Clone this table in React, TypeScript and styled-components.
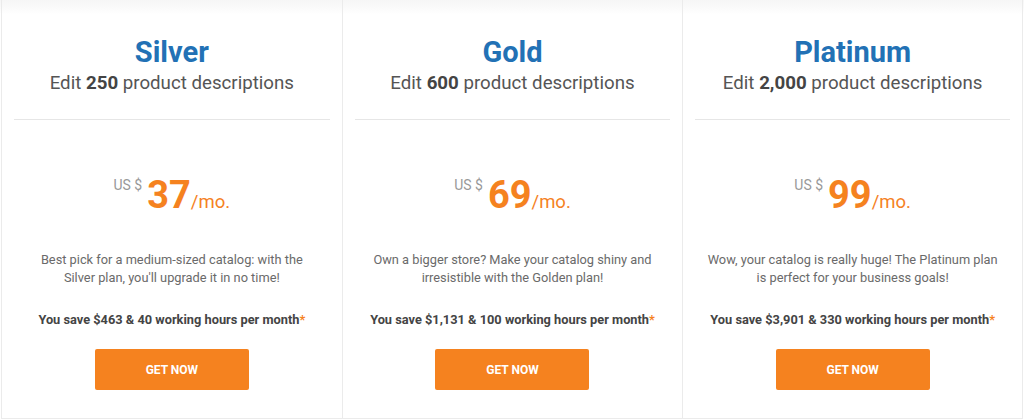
import styled, { createGlobalStyle } from "styled-components";

const GlobalStyle = createGlobalStyle`
	html, body {
		margin: 0;
		padding: 0;
		background: #ffffff;
	}
	body {
		font-family: Roboto, "Liberation Sans", Arial, sans-serif;
	}
`;

const Page = styled.div`
	width: 1024px;
	height: 420px;
	box-sizing: border-box;
	padding: 0 1px 1px 1px;
	background: linear-gradient(to bottom, #f6f6f6 0px, #fdfdfd 12px, #ffffff 14px);
`;

const Plans = styled.div`
	display: grid;
	grid-template-columns: repeat(3, 1fr);
	height: 100%;
	border-bottom: 1px solid #ebebeb;
	box-sizing: border-box;
`;

const Plan = styled.div`
	display: flex;
	flex-direction: column;
	align-items: center;
	border-left: 1px solid #ebebeb;
	padding: 34px 12px 0;
	text-align: center;

	&:last-child {
		border-right: 1px solid #ebebeb;
	}
`;

const Title = styled.h2`
	margin: 0;
	font-size: 29px;
	line-height: 36px;
	font-weight: 700;
	color: #2271b5;
`;

const Subtitle = styled.p`
	margin: 1px 0 0;
	font-size: 18.7px;
	line-height: 24px;
	color: #555555;

	b {
		color: #444444;
	}
`;

const Divider = styled.hr`
	align-self: stretch;
	margin: 24px 0 0;
	border: 0;
	border-top: 1px solid #e6e6e6;
`;

const PriceRow = styled.div`
	display: flex;
	align-items: baseline;
	margin-top: 53px;
	color: #f5821f;
`;

const Currency = styled.span`
	align-self: flex-start;
	margin-top: 4px;
	margin-right: 5px;
	font-size: 14px;
	line-height: 16px;
	color: #999999;
`;

const Amount = styled.span`
	font-size: 38px;
	line-height: 44px;
	font-weight: 700;
`;

const Period = styled.span`
	font-size: 18.5px;
`;

const Description = styled.p`
	margin: 34px 0 0;
	font-size: 12.8px;
	line-height: 18px;
	color: #6a6a6a;
	white-space: pre-line;
`;

const Savings = styled.p`
	margin: 24px 0 0;
	font-size: 12.8px;
	line-height: 18px;
	font-weight: 700;
	color: #444444;

	span {
		color: #f5821f;
	}
`;

const Button = styled.a`
	display: flex;
	align-items: center;
	justify-content: center;
	width: 154px;
	height: 41px;
	margin-top: 20px;
	border-radius: 2px;
	background: #f5821f;
	color: #ffffff;
	font-size: 12px;
	font-weight: 700;
	text-decoration: none;
	text-transform: uppercase;
	cursor: pointer;
`;

interface IPlan {
	name: string;
	count: string;
	price: string;
	description: string;
	money: string;
	hours: string;
}

const plans: IPlan[] = [
	{
		name: "Silver",
		count: "250",
		price: "37",
		description:
			"Best pick for a medium-sized catalog: with the\nSilver plan, you'll upgrade it in no time!",
		money: "$463",
		hours: "40",
	},
	{
		name: "Gold",
		count: "600",
		price: "69",
		description:
			"Own a bigger store? Make your catalog shiny and\nirresistible with the Golden plan!",
		money: "$1,131",
		hours: "100",
	},
	{
		name: "Platinum",
		count: "2,000",
		price: "99",
		description:
			"Wow, your catalog is really huge! The Platinum plan\nis perfect for your business goals!",
		money: "$3,901",
		hours: "330",
	},
];

function App() {
	return (
		<>
			<GlobalStyle />
			<Page>
				<Plans>
					{plans.map((plan) => (
						<Plan key={plan.name}>
							<Title>{plan.name}</Title>
							<Subtitle>
								Edit <b>{plan.count}</b> product descriptions
							</Subtitle>
							<Divider />
							<PriceRow>
								<Currency>US $</Currency>
								<Amount>{plan.price}</Amount>
								<Period>/mo.</Period>
							</PriceRow>
							<Description>{plan.description}</Description>
							<Savings>
								You save {plan.money} &amp; {plan.hours} working hours per month
								<span>*</span>
							</Savings>
							<Button>Get now</Button>
						</Plan>
					))}
				</Plans>
			</Page>
		</>
	);
}

export default App;
